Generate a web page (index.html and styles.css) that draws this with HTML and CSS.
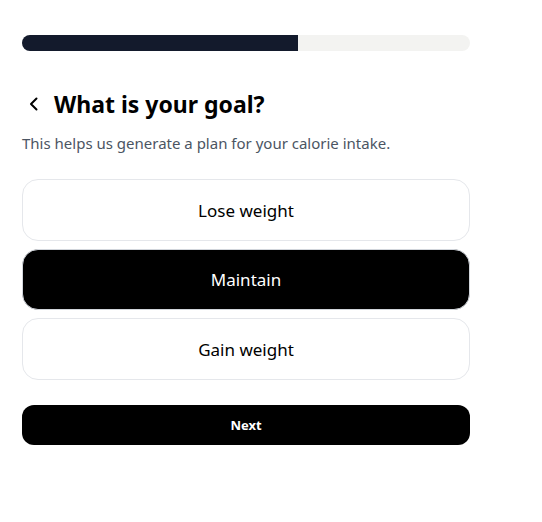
FILE: index.html
```
<!DOCTYPE html>
<html>
<head>
<meta charset="utf-8">
<link rel="stylesheet" href="styles.css">
</head>
<body>
<div class="page">
  <div class="progress"><div class="progress-fill" style="width: 61.6%"></div></div>
  <div class="header">
    <button class="back" aria-label="Back">
      <svg width="16" height="16" viewBox="0 0 16 16"><path d="M10.5 2.5 L5 8 L10.5 13.5" fill="none" stroke="#000" stroke-width="2" stroke-linecap="round" stroke-linejoin="round"/></svg>
    </button>
    <h1 class="title">What is your goal?</h1>
  </div>
  <p class="subtitle">This helps us generate a plan for your calorie intake.</p>
  <div class="options">
    <button class="option">Lose weight</button>
    <button class="option selected">Maintain</button>
    <button class="option">Gain weight</button>
  </div>
  <button class="next">Next</button>
</div>
</body>
</html>
```
FILE: styles.css
```
* { box-sizing: border-box; }
html, body { margin: 0; background: #fff; }
body { font-family: "Noto Sans", "Open Sans", sans-serif; color: #000; }
.page { width: 448px; margin-left: 22px; padding-top: 35px; display: flex; flex-direction: column; }
.progress { height: 16px; border-radius: 8px; background: #f3f3f1; overflow: hidden; }
.progress-fill { height: 100%; background: #131a2c; }
.header { display: flex; align-items: center; gap: 10px; margin-top: 39px; height: 28px; }
.back { border: 0; background: none; padding: 0; width: 20px; height: 20px; display: flex; align-items: center; justify-content: center; margin-left: 2px; }
.title { margin: 0; font-size: 23px; font-weight: 700; line-height: 28px; }
.subtitle { margin: 15px 0 0; font-size: 15px; line-height: 20px; color: #4b5563; }
.options { display: flex; flex-direction: column; gap: 8px; margin-top: 26px; }
.option { height: 62px; border: 1px solid #e5e7eb; border-radius: 16px; background: #fff; font-family: inherit; font-size: 17px; color: #000; }
.option.selected { background: #000; color: #fff; border-color: #d1d5db; height: 61px; }
.next { margin-top: 25px; height: 40px; border: 0; border-radius: 12px; background: #000; color: #fff; font-family: inherit; font-size: 13px; font-weight: 700; }
```
